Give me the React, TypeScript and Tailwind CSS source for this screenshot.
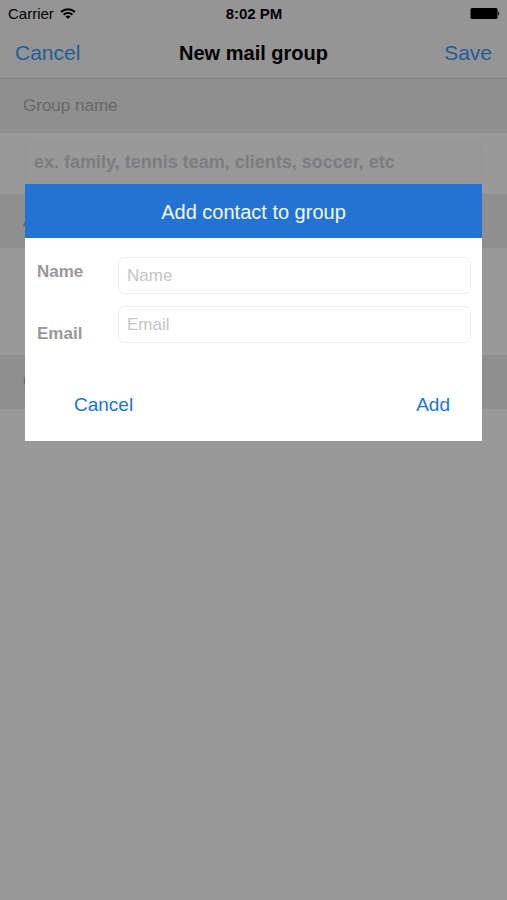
import type { ReactNode } from "react";

function WifiIcon() {
  return (
    <svg width="16" height="12" viewBox="0 0 16 12" fill="none" stroke="black" strokeWidth="2" aria-hidden="true">
      <path d="M1 4C5 0.2 11 0.2 15 4" />
      <path d="M3.6 6.7C6.2 4.3 9.8 4.3 12.4 6.7" />
      <path d="M8 11L5.5 8.5C7 7.1 9 7.1 10.5 8.5Z" fill="black" stroke="none" />
    </svg>
  );
}

function BatteryIcon() {
  return (
    <svg width="30" height="12" viewBox="0 0 30 12" aria-hidden="true">
      <rect x="0.5" y="0" width="27" height="11" rx="1.5" fill="black" />
      <path d="M28.2 3.5C29.6 3.9 29.6 7.1 28.2 7.5Z" fill="black" />
    </svg>
  );
}

function StatusBar() {
  return (
    <div className="grid h-[27px] grid-cols-3 items-center pr-[7px] pl-2 text-[15px] leading-5">
      <div className="flex items-center gap-[6px]">
        <span>Carrier</span>
        <WifiIcon />
      </div>
      <span className="text-center font-bold">8:02 PM</span>
      <div className="flex justify-end">
        <BatteryIcon />
      </div>
    </div>
  );
}

function SectionHeader({ children }: { children: ReactNode }) {
  return (
    <div className="flex h-[54px] items-center bg-[#eeeeee] px-[23px] text-[17px] text-[#acacac]">
      {children}
    </div>
  );
}

function Field({ id, placeholder, type }: { id: string; placeholder: string; type: string }) {
  return (
    <input
      id={id}
      type={type}
      placeholder={placeholder}
      className="h-[37px] w-full rounded-md border border-[#eeeeee] bg-white px-2 text-[17px] text-black outline-none placeholder:text-[#c4c4c6]"
    />
  );
}

function AddContactDialog() {
  return (
    <div className="fixed inset-0 bg-black/40 px-[25px] pt-[184px]">
      <form
        role="dialog"
        aria-labelledby="dialog-title"
        className="bg-white"
        onSubmit={(event) => event.preventDefault()}
      >
        <h2
          id="dialog-title"
          className="flex h-[54px] items-center justify-center bg-[#2273d4] pt-0.5 text-[20px] text-[#f4f9ff]"
        >
          Add contact to group
        </h2>
        <div className="flex pr-[11px] pl-3">
          <div className="flex w-[81px] shrink-0 flex-col gap-[38px] pt-[22px] text-[17px] leading-6 font-bold text-[#989898]">
            <label htmlFor="contact-name">Name</label>
            <label htmlFor="contact-email">Email</label>
          </div>
          <div className="flex grow flex-col gap-3 pt-[19px]">
            <Field id="contact-name" type="text" placeholder="Name" />
            <Field id="contact-email" type="email" placeholder="Email" />
          </div>
        </div>
        <div className="flex justify-between pt-[47px] pr-8 pb-6 pl-[49px] text-[19px] leading-6 text-[#1a74d6]">
          <button type="button">Cancel</button>
          <button type="submit">Add</button>
        </div>
      </form>
    </div>
  );
}

export default function App() {
  return (
    <div className="min-h-screen bg-white font-['Liberation_Sans',Arial,sans-serif] text-black">
      <header className="border-b border-[#dcdcdc] bg-[#f9f9f9]">
        <StatusBar />
        <nav className="grid h-[51px] grid-cols-[1fr_auto_1fr] items-center px-[15px] text-[21px] text-[#359dfc]">
          <button type="button" className="justify-self-start">
            Cancel
          </button>
          <h1 className="text-[20px] font-bold text-black">New mail group</h1>
          <button type="button" className="justify-self-end">
            Save
          </button>
        </nav>
      </header>
      <main>
        <SectionHeader>
          <label htmlFor="group-name">Group name</label>
        </SectionHeader>
        <div className="h-[61px] px-[25px] pt-[9px]">
          <input
            id="group-name"
            type="text"
            placeholder="ex. family, tennis team, clients, soccer, etc"
            className="h-10 w-full rounded-md border border-[#f6f6f6] bg-transparent px-2 text-[18px] font-bold outline-none placeholder:text-[#d0d0d4]"
          />
        </div>
        <SectionHeader>Add contact</SectionHeader>
        <div className="h-[107px]" />
        <SectionHeader>Contacts</SectionHeader>
      </main>
      <AddContactDialog />
    </div>
  );
}
